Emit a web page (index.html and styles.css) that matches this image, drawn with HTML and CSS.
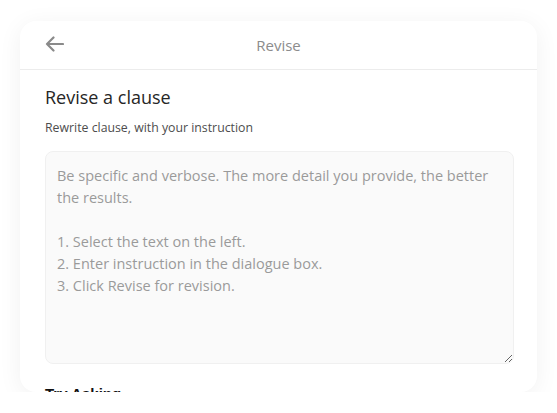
FILE: index.html
```html
<!DOCTYPE html>
<html lang="en">
<head>
    <meta charset="utf-8"/>
    <title>Revise</title>
    <link rel="stylesheet" href="styles.css">
</head>
<body>
    <div class="panel">
        <header class="panel-header">
            <button class="back" aria-label="back">
                <svg width="19" height="16" viewBox="0 0 19 16" fill="none" stroke="#8a8a8a" stroke-width="2.2" stroke-linecap="round" stroke-linejoin="round">
                    <path d="M18 8H2M8.5 1.5L2 8l6.5 6.5"/>
                </svg>
            </button>
            <h1 class="panel-title">Revise</h1>
        </header>
        <div class="panel-body">
            <h2 class="section-title">Revise a clause</h2>
            <p class="section-desc">Rewrite clause, with your instruction</p>
            <textarea class="instruction" placeholder="Be specific and verbose. The more detail you provide, the better the results.

1. Select the text on the left.
2. Enter instruction in the dialogue box.
3. Click Revise for revision."></textarea>
            <h3 class="try-title">Try Asking</h3>
        </div>
    </div>
</body>
</html>
```
FILE: styles.css
```css
body {
    margin: 0;
    background: #fff;
    font-family: "Open Sans", "Noto Sans", sans-serif;
}

.panel {
    box-sizing: border-box;
    margin: 21px 0 0 20px;
    width: 517px;
    height: 371px;
    overflow: hidden;
    background: #fff;
    border-radius: 16px;
    box-shadow: 0 4px 24px rgba(0, 0, 0, 0.06);
}

.panel-header {
    position: relative;
    display: flex;
    align-items: center;
    justify-content: center;
    height: 48px;
    border-bottom: 1px solid #ececec;
}
.back {
    position: absolute;
    left: 25px;
    top: 15px;
    padding: 0;
    border: 0;
    background: none;
    line-height: 0;
}
.panel-title {
    margin: 0;
    font-size: 15px;
    font-weight: 400;
    color: #8c8c8c;
}

.panel-body {
    padding: 15px 24px 0 25px;
}
.section-title {
    margin: 0;
    font-size: 18px;
    font-weight: 400;
    line-height: 24px;
    color: #262626;
}
.section-desc {
    margin: 10px 0 14px;
    font-size: 12.3px;
    line-height: 18px;
    color: #4d4d4d;
}

.instruction {
    display: block;
    box-sizing: border-box;
    width: 469px;
    height: 213px;
    padding: 13px 11px;
    border: 1px solid #f0f0f0;
    border-radius: 8px;
    background: #fafafa;
    font-family: inherit;
    font-size: 14.5px;
    line-height: 22px;
    resize: vertical;
    outline: none;
}
.instruction::placeholder {
    color: #9a9a9a;
}

.try-title {
    margin: 21px 0 0;
    font-family: "Liberation Sans", Arial, sans-serif;
    font-size: 15px;
    font-weight: 700;
    color: #111;
}
```
